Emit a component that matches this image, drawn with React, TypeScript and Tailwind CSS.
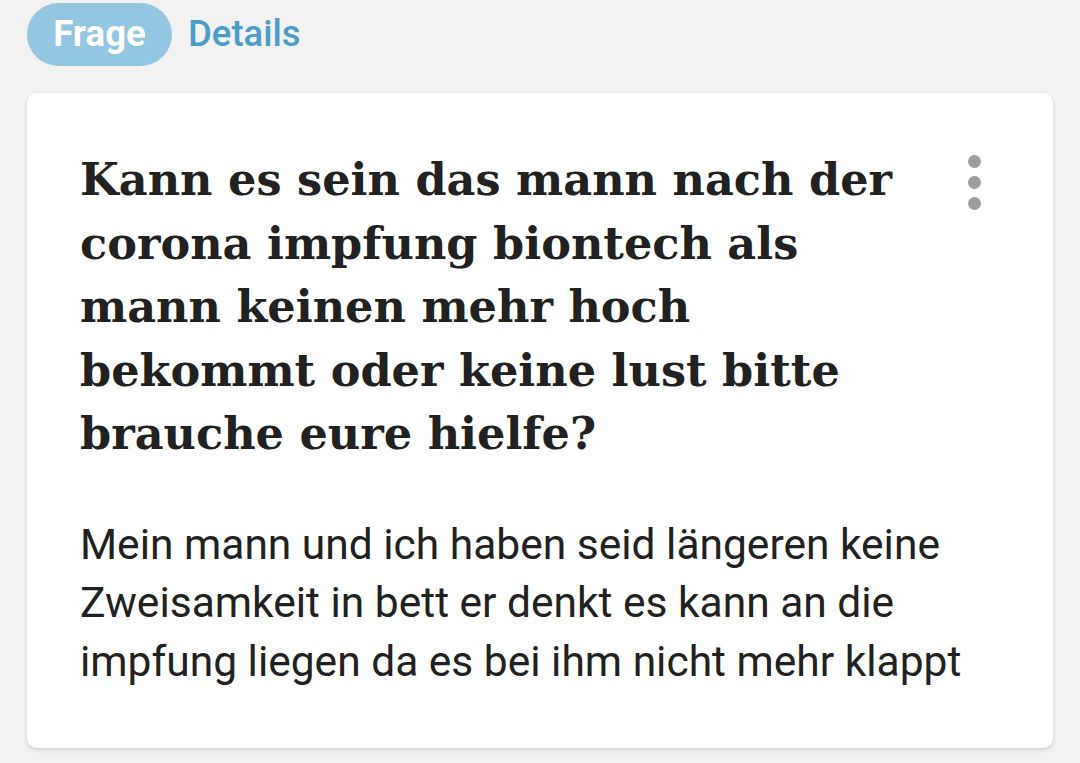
export default function App() {
  return (
    <div className="min-h-[763px] w-[1080px] bg-[#f2f2f2] font-['Roboto',sans-serif]">
      {/* Tabs */}
      <div className="flex items-center gap-4 pl-[27px] pt-[3px]">
        <span className="flex h-[63px] w-[145px] items-center justify-center rounded-full bg-[#93c6e0] text-[36.5px] font-bold text-white">
          Frage
        </span>
        <span className="text-[36.5px] font-medium text-[#4b9dc8]">Details</span>
      </div>

      {/* Question card */}
      <div className="mx-[27px] mt-[27px] rounded-[10px] bg-white pb-[57px] pl-[53px] pr-[72px] pt-[55px] shadow-[0_2px_4px_rgba(0,0,0,0.15)]">
        <div className="flex items-start justify-between">
          <h1 className="w-[830px] font-['DejaVu_Serif',serif] text-[44.6px] font-bold leading-[63.5px] text-[#212121]">
            Kann es sein das mann nach der corona impfung biontech als mann keinen mehr hoch bekommt oder
            keine lust bitte brauche eure hielfe?
          </h1>
          <div className="mt-[7px] flex flex-col gap-[8px]">
            <span className="h-[13px] w-[13px] rounded-full bg-[#9e9e9e]" />
            <span className="h-[13px] w-[13px] rounded-full bg-[#9e9e9e]" />
            <span className="h-[13px] w-[13px] rounded-full bg-[#9e9e9e]" />
          </div>
        </div>
        <p className="mt-[50px] w-[900px] text-[42.5px] leading-[58.5px] text-[#212121]">
          Mein mann und ich haben seid längeren keine Zweisamkeit in bett er denkt es kann an die impfung
          liegen da es bei ihm nicht mehr klappt
        </p>
      </div>
    </div>
  );
}
